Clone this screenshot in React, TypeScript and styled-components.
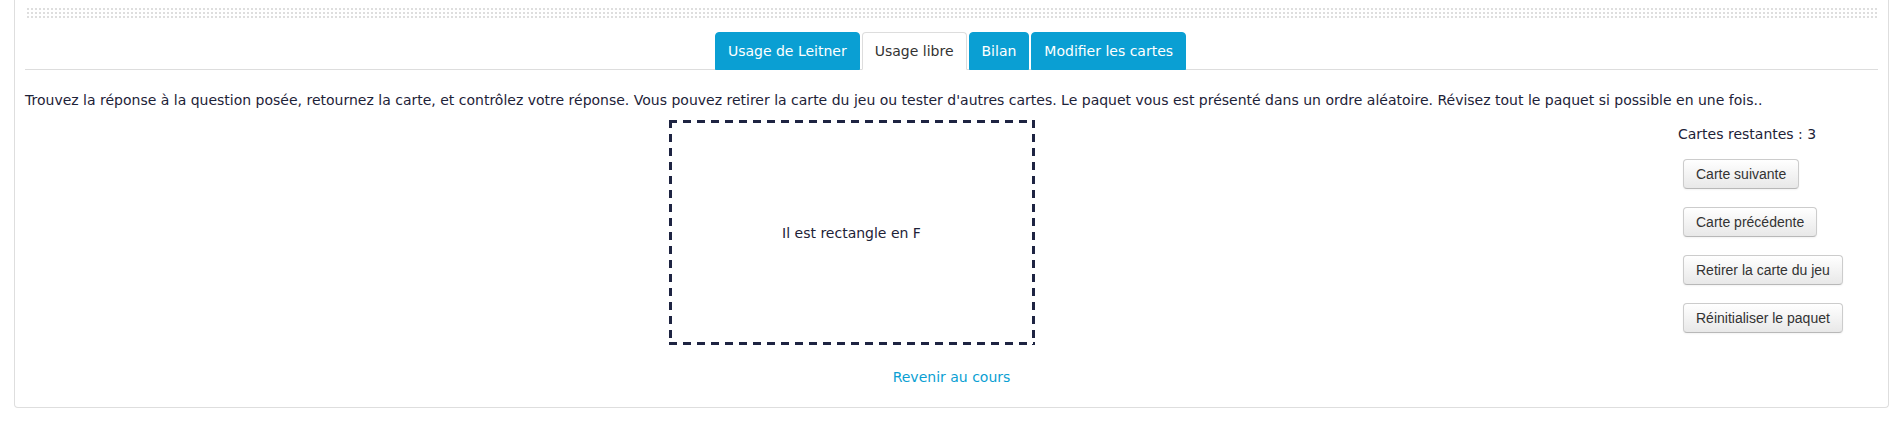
import React from "react";
import styled, { createGlobalStyle } from "styled-components";

const Global = createGlobalStyle`
  html, body { margin: 0; padding: 0; background: #fff; }
  body {
    font-family: "DejaVu Sans", Verdana, sans-serif;
    font-size: 14px;
    line-height: 20px;
    color: #1d2238;
  }
`;

const Page = styled.div`
  padding: 0 15px 13px 14px;
`;

const Panel = styled.section`
  border: 1px solid #dedede;
  border-top: none;
  border-radius: 0 0 4px 4px;
  padding: 8px 10px 20px 10px;
`;

const DotStrip = styled.div`
  height: 10px;
  background: conic-gradient(#dedede 25%, transparent 0) 0 0 / 4px 4px;
`;

const TabBar = styled.nav`
  margin-top: 14px;
  display: flex;
  justify-content: center;
  border-bottom: 1px solid #dddddd;
  margin-bottom: 20px;
`;

const Tab = styled.a<{ $active?: boolean }>`
  display: block;
  margin: 0 2px -1px 0;
  padding: 8px 12px;
  line-height: 20px;
  font-size: 14px;
  text-decoration: none;
  border-radius: 4px 4px 0 0;
  cursor: pointer;
  border: 1px solid ${(p) => (p.$active ? "#dddddd" : "#0a9fd3")};
  border-bottom-color: ${(p) => (p.$active ? "#ffffff" : "#0a9fd3")};
  background: ${(p) => (p.$active ? "#ffffff" : "#0a9fd3")};
  color: ${(p) => (p.$active ? "#333333" : "#ffffff")};
`;

const Intro = styled.p`
  margin: 0 0 10px;
`;

const Workspace = styled.div`
  display: flex;
  align-items: flex-start;
`;

const CardArea = styled.div`
  flex: 1;
  display: flex;
  justify-content: center;
`;

const dash = "#1e2442";

const FlashCard = styled.div`
  width: 366px;
  height: 225px;
  box-sizing: border-box;
  padding: 3px;
  display: flex;
  align-items: center;
  justify-content: center;
  color: #1d2238;
  background-image:
    repeating-linear-gradient(90deg, ${dash} 0 8px, transparent 8px 14px),
    repeating-linear-gradient(90deg, ${dash} 0 8px, transparent 8px 14px),
    repeating-linear-gradient(180deg, ${dash} 0 8px, transparent 8px 14px),
    repeating-linear-gradient(180deg, ${dash} 0 8px, transparent 8px 14px);
  background-size: 100% 3px, 100% 3px, 3px 100%, 3px 100%;
  background-position: left top, left bottom, left top, right top;
  background-repeat: no-repeat;
`;

const SideColumn = styled.aside`
  width: 200px;
  padding-top: 4px;
`;

const Remaining = styled.div`
  line-height: 20px;
`;

const ButtonList = styled.div`
  margin: 15px 0 0 5px;
  display: flex;
  flex-direction: column;
  align-items: flex-start;
  gap: 18px;
`;

const ActionButton = styled.button`
  height: 30px;
  padding: 0 12px;
  font-family: "Liberation Sans", Arial, sans-serif;
  font-size: 14px;
  color: #333333;
  background: linear-gradient(#ffffff, #e8e8e8);
  border: 1px solid #cccccc;
  border-bottom-color: #b8b8b8;
  border-radius: 4px;
  box-shadow: inset 0 1px 0 rgba(255, 255, 255, 0.2), 0 1px 2px rgba(0, 0, 0, 0.05);
  cursor: pointer;
`;

const BackLink = styled.a`
  display: block;
  margin-top: 22px;
  text-align: center;
  color: #0a9fd3;
  text-decoration: none;
`;

const tabs = [
  { label: "Usage de Leitner" },
  { label: "Usage libre", active: true },
  { label: "Bilan" },
  { label: "Modifier les cartes" },
];

const actions = [
  "Carte suivante",
  "Carte précédente",
  "Retirer la carte du jeu",
  "Réinitialiser le paquet",
];

export default function App() {
  return (
    <>
      <Global />
      <Page>
        <Panel>
          <DotStrip />
          <TabBar>
            {tabs.map((t) => (
              <Tab key={t.label} $active={t.active}>
                {t.label}
              </Tab>
            ))}
          </TabBar>
          <Intro>
            Trouvez la réponse à la question posée, retournez la carte, et contrôlez votre réponse. Vous pouvez retirer la carte du jeu ou tester d'autres cartes. Le paquet vous est présenté dans un ordre aléatoire. Révisez tout le paquet si possible en une fois..
          </Intro>
          <Workspace>
            <CardArea>
              <FlashCard>Il est rectangle en F</FlashCard>
            </CardArea>
            <SideColumn>
              <Remaining>Cartes restantes : 3</Remaining>
              <ButtonList>
                {actions.map((a) => (
                  <ActionButton key={a}>{a}</ActionButton>
                ))}
              </ButtonList>
            </SideColumn>
          </Workspace>
          <BackLink href="#">Revenir au cours</BackLink>
        </Panel>
      </Page>
    </>
  );
}
